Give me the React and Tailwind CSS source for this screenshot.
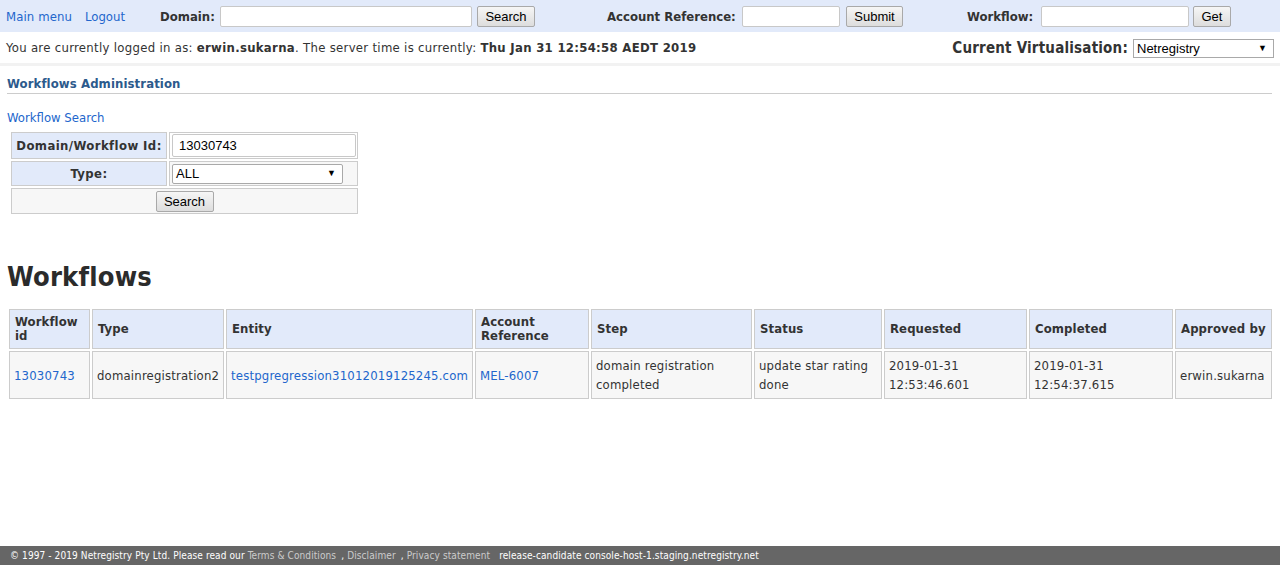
import React from "react";

const F = { fontFamily: '"DejaVu Sans Condensed", "DejaVu Sans", sans-serif' };

function Btn({ children, className = "" }) {
  return (
    <button
      className={
        "h-[21px] border border-[#a9a9a9] rounded-[2px] bg-gradient-to-b from-[#f6f6f6] to-[#dddddd] text-[13px] text-black leading-none px-[6px] " +
        className
      }
      style={{ fontFamily: '"Liberation Sans", Arial, sans-serif' }}
    >
      {children}
    </button>
  );
}

function Input({ className = "", value = "" }) {
  return (
    <div
      className={
        "h-[21px] bg-white border border-[#c8c8c8] rounded-[2px] text-[13px] text-black flex items-center px-[6px] " +
        className
      }
      style={{ fontFamily: '"Liberation Sans", Arial, sans-serif' }}
    >
      {value}
    </div>
  );
}

function Select({ value, className = "" }) {
  return (
    <div
      className={
        "bg-white border border-[#a9a9a9] text-[13px] text-black flex items-center justify-between pl-[3px] pr-[6px] " +
        className
      }
      style={{ fontFamily: '"Liberation Sans", Arial, sans-serif' }}
    >
      <span>{value}</span>
      <span className="text-[9px]">▼</span>
    </div>
  );
}

const cols = [
  { h: "Workflow id", w: 81 },
  { h: "Type", w: 132 },
  { h: "Entity", w: 247 },
  { h: "Account Reference", w: 114 },
  { h: "Step", w: 161 },
  { h: "Status", w: 128 },
  { h: "Requested", w: 143 },
  { h: "Completed", w: 144 },
  { h: "Approved by", w: 97 },
];

export default function App() {
  const link = "text-[#2266cc]";
  return (
    <div className="w-[1280px] h-[565px] bg-white text-[#333] flex flex-col text-[13px]" style={F}>
      {/* top bar */}
      <div className="h-[32px] bg-[#e2eafa] flex items-center pl-[6px] pt-[1px]">
        <span className={link + " tracking-[0.1px]"}>Main menu</span>
        <span className={link + " ml-[13px]"}>Logout</span>
        <span className="font-bold ml-[35px] w-[60px]">Domain:</span>
        <Input className="w-[252px]" />
        <Btn className="ml-[5px] w-[58px]">Search</Btn>
        <span className="font-bold ml-[72px] w-[135px]">Account Reference:</span>
        <Input className="w-[98px]" />
        <Btn className="ml-[6px] w-[57px]">Submit</Btn>
        <span className="font-bold ml-[64px] w-[74px]">Workflow:</span>
        <Input className="w-[148px]" />
        <Btn className="ml-[4px] w-[38px]">Get</Btn>
      </div>
      {/* info row */}
      <div className="h-[31px] flex items-center justify-between pl-[6px] pr-[6px]">
        <span className="tracking-[0.3px]">
          You are currently logged in as: <b>erwin.sukarna</b>. The server time is currently:{" "}
          <b>Thu Jan 31 12:54:58 AEDT 2019</b>
        </span>
        <div className="flex items-center pt-[2px]">
          <span className="font-bold text-[15px] mr-[5px] tracking-[0.2px]">Current Virtualisation:</span>
          <Select value="Netregistry" className="w-[141px] h-[19px]" />
        </div>
      </div>
      <div className="h-[3px] bg-[#f2f2f2]" />
      {/* content */}
      <div className="px-[7px] pt-[9px] flex-1">
        <div className="font-bold text-[#2c5a8c] pb-[1px] border-b border-[#cccccc] mr-[1px] leading-[17px] tracking-[0.1px]">
          Workflows Administration
        </div>
        <div className={link + " mt-[14px] leading-[19px]"}>Workflow Search</div>
        <table className="border-separate border-spacing-[2px] ml-[2px] mt-[3px]">
          <tbody>
            <tr>
              <td className="w-[156px] h-[27px] bg-[#e2eafa] border border-[#cccccc] font-bold text-center p-0 tracking-[0.4px]">
                Domain/Workflow Id:
              </td>
              <td className="w-[189px] border border-[#cccccc] p-0 pl-[2px]">
                <Input value="13030743" className="w-[184px] h-[23px]" />
              </td>
            </tr>
            <tr>
              <td className="h-[25px] bg-[#e2eafa] border border-[#cccccc] font-bold text-center p-0 tracking-[0.4px]">Type:</td>
              <td className="border border-[#cccccc] bg-[#f7f7f7] p-0 pl-[2px]">
                <Select value="ALL" className="w-[171px] h-[20px] rounded-[2px]" />
              </td>
            </tr>
            <tr>
              <td colSpan={2} className="h-[26px] border border-[#cccccc] bg-[#f7f7f7] text-center p-0">
                <Btn className="w-[58px]">Search</Btn>
              </td>
            </tr>
          </tbody>
        </table>
        <h2 className="text-[27px] font-bold text-[#2b2b2b] mt-[45px] leading-[32px] tracking-[0.2px]">Workflows</h2>
        <table className="border-separate border-spacing-[2px] mt-[14px] table-fixed" style={{ width: 1267 }}>
          <colgroup>
            {cols.map((c) => (
              <col key={c.h} style={{ width: c.w }} />
            ))}
          </colgroup>
          <thead>
            <tr>
              {cols.map((c) => (
                <th
                  key={c.h}
                  className="bg-[#e2eafa] border border-[#cccccc] text-left font-bold leading-[14px] h-[40px] px-[5px] py-0 align-middle tracking-[0.1px]"
                >
                  {c.h}
                </th>
              ))}
            </tr>
          </thead>
          <tbody>
            <tr className="bg-[#f7f7f7]">
              {[
                <span className={link}>13030743</span>,
                "domainregistration2",
                <span className={link}>testpgregression31012019125245.com</span>,
                <span className={link}>MEL-6007</span>,
                <>domain registration<br />completed</>,
                <>update star rating<br />done</>,
                <>2019-01-31<br />12:53:46.601</>,
                <>2019-01-31<br />12:54:37.615</>,
                "erwin.sukarna",
              ].map((v, i) => (
                <td
                  key={i}
                  className="border border-[#cccccc] leading-[19px] h-[48px] px-[4px] py-0 align-middle whitespace-nowrap tracking-[0.18px]"
                >
                  {v}
                </td>
              ))}
            </tr>
          </tbody>
        </table>
      </div>
      {/* footer */}
      <div className="h-[19px] bg-[#666666] text-white text-[10px] flex items-center pl-[10px] tracking-[0.1px]">
        <span>© 1997 - 2019 Netregistry Pty Ltd. Please read our </span>
        <span className="text-[#cccccc] ml-[3px]">Terms &amp; Conditions</span>
        <span className="ml-[5px]">,</span>
        <span className="text-[#cccccc] ml-[3px]">Disclaimer</span>
        <span className="ml-[5px]">,</span>
        <span className="text-[#cccccc] ml-[3px]">Privacy statement</span>
        <span className="ml-[9px]">release-candidate console-host-1.staging.netregistry.net</span>
      </div>
    </div>
  );
}
